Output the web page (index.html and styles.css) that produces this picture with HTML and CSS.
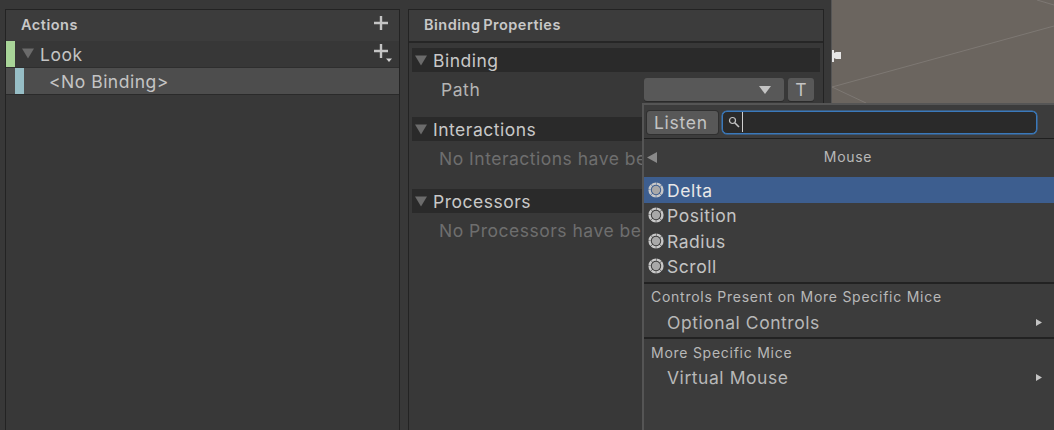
FILE: index.html
```html
<!DOCTYPE html>
<html lang="en">
<head>
<meta charset="utf-8">
<title>Input Actions</title>
<link rel="stylesheet" href="styles.css">
</head>
<body>
<div class="app">
  <section class="panel actions">
    <header class="panel-head">
      <span class="panel-title">Actions</span>
      <svg class="plus" width="16" height="16" viewBox="0 0 16 16"><path d="M8 1v14M1 8h14" stroke="#c4c4c4" stroke-width="2.4"/></svg>
    </header>
    <div class="row-look">
      <i class="swatch green"></i>
      <svg class="tri" width="12" height="11" viewBox="0 1 13 11"><path d="M0 1h13L6.500 12z" fill="#6b6b6b"/></svg>
      <span class="look-label">Look</span>
      <span class="look-add">
        <svg width="20" height="20" viewBox="0 0 20 20"><path d="M8 1v14M1 8h14" stroke="#c4c4c4" stroke-width="2.400"/><path d="M13 15.500h6l-3 3.500z" fill="#d0d0d0"/></svg>
      </span>
    </div>
    <div class="row-binding">
      <i class="swatch teal"></i>
      <span class="binding-label">&lt;No Binding&gt;</span>
    </div>
  </section>

  <section class="panel props">
    <header class="panel-head">
      <span class="panel-title">Binding Properties</span>
    </header>
    <div class="props-body">
      <div class="fold">
        <svg class="tri" width="12" height="11" viewBox="0 1 13 11"><path d="M0 1h13L6.500 12z" fill="#6b6b6b"/></svg>
        <span>Binding</span>
      </div>
      <div class="path-row">
        <span class="path-label">Path</span>
        <span class="path-select"><svg width="12" height="8" viewBox="0 0 12 8"><path d="M0 0h12L6 8z" fill="#c4c4c4"/></svg></span>
        <span class="path-t">T</span>
      </div>
      <div class="fold fold-interactions">
        <svg class="tri" width="12" height="11" viewBox="0 1 13 11"><path d="M0 1h13L6.500 12z" fill="#6b6b6b"/></svg>
        <span>Interactions</span>
      </div>
      <p class="empty">No Interactions have been added.</p>
      <div class="fold fold-processors">
        <svg class="tri" width="12" height="11" viewBox="0 1 13 11"><path d="M0 1h13L6.500 12z" fill="#6b6b6b"/></svg>
        <span>Processors</span>
      </div>
      <p class="empty">No Processors have been added.</p>
    </div>
  </section>

  <section class="scene">
    <svg class="scene-lines" width="222" height="110" viewBox="0 0 222 110">
      <path d="M0 87L222 26M0 87L34 103M205 0L222 5" stroke="#7d7873" stroke-width="1" fill="none"/>
    </svg>
    <svg class="scene-flag" width="9" height="12" viewBox="0 0 9 12"><path d="M0 0h2v12H0zM2 3l2-1h5v7H4l-2-1z" fill="#e6e6e6"/></svg>
  </section>
</div>

<div class="popup">
  <div class="search-bar">
    <span class="listen">Listen</span>
    <div class="search">
      <svg width="12" height="12" viewBox="0 0 12 12"><circle cx="4.500" cy="4.500" r="3" fill="none" stroke="#c4c4c4" stroke-width="1.200"/><path d="M7 7l4 4" stroke="#c4c4c4" stroke-width="1.600"/></svg>
      <i class="caret"></i>
    </div>
  </div>
  <div class="crumb">
    <svg class="back" width="10" height="11" viewBox="0 0 10 11"><path d="M10 0v11L0 5.500z" fill="#8a8a8a"/></svg>
    <span>Mouse</span>
  </div>
  <ul class="list">
    <li class="item selected"><svg class="ctl" width="16" height="16" viewBox="0 0 16 16"><circle cx="8" cy="8" r="6.400" fill="none" stroke="#c8c8c8" stroke-width="2.400" stroke-dasharray="4.500 .5"/><circle cx="8" cy="8" r="4.200" fill="#a8a8a8"/></svg>Delta</li>
    <li class="item"><svg class="ctl" width="16" height="16" viewBox="0 0 16 16"><circle cx="8" cy="8" r="6.400" fill="none" stroke="#c8c8c8" stroke-width="2.400" stroke-dasharray="4.500 .5"/><circle cx="8" cy="8" r="4.200" fill="#a8a8a8"/></svg>Position</li>
    <li class="item"><svg class="ctl" width="16" height="16" viewBox="0 0 16 16"><circle cx="8" cy="8" r="6.400" fill="none" stroke="#c8c8c8" stroke-width="2.400" stroke-dasharray="4.500 .5"/><circle cx="8" cy="8" r="4.200" fill="#a8a8a8"/></svg>Radius</li>
    <li class="item"><svg class="ctl" width="16" height="16" viewBox="0 0 16 16"><circle cx="8" cy="8" r="6.400" fill="none" stroke="#c8c8c8" stroke-width="2.400" stroke-dasharray="4.500 .5"/><circle cx="8" cy="8" r="4.200" fill="#a8a8a8"/></svg>Scroll</li>
  </ul>
  <div class="group">
    <div class="group-title">Controls Present on More Specific Mice</div>
    <div class="group-item"><span>Optional Controls</span><svg width="6" height="7" viewBox="0 0 6 7"><path d="M0 0l6 3.500L0 7z" fill="#c4c4c4"/></svg></div>
  </div>
  <div class="group">
    <div class="group-title">More Specific Mice</div>
    <div class="group-item"><span>Virtual Mouse</span><svg width="6" height="7" viewBox="0 0 6 7"><path d="M0 0l6 3.500L0 7z" fill="#c4c4c4"/></svg></div>
  </div>
</div>
</body>
</html>
```

FILE: styles.css
```css
* { box-sizing: border-box; }
html, body { margin: 0; padding: 0; }
body {
  width: 1054px;
  height: 430px;
  overflow: hidden;
  background: #383838;
  font-family: Inter, "Liberation Sans", sans-serif;
  color: #c4c4c4;
  position: relative;
}
.app {
  display: flex;
  height: 430px;
  padding-top: 9px;
  padding-left: 5px;
}
.panel {
  border: 1px solid #232323;
  border-bottom: 0;
  background: #383838;
  display: flex;
  flex-direction: column;
}
.actions { width: 395px; margin-right: 8px; }
.props { width: 416px; }
.panel-head {
  height: 31px;
  flex: none;
  background: #3c3c3c;
  display: flex;
  align-items: flex-start;
  justify-content: space-between;
  padding: 6px 10px 0 15px;
}
.panel-title {
  font-size: 14.500px;
  font-weight: 600;
  letter-spacing: .5px;
  word-spacing: -1.500px;
  line-height: 17px;
  color: #c8c8c8;
}
.plus { margin-top: -1px; }
.row-look {
  height: 26px;
  display: flex;
  align-items: center;
  background: #373737;
}
.swatch { display: block; width: 9px; height: 100%; flex: none; }
.green { background: #a8d498; }
.teal { background: #97bec6; margin-left: 9px; }
.row-look .tri { margin: -1px 0 0 7px; }
.look-label { font-size: 17.500px; letter-spacing: .55px; margin-left: 6px; }
.look-add { margin-left: auto; margin-right: 6px; display: flex; margin-top: -2px; }
.row-binding {
  height: 28px;
  display: flex;
  align-items: center;
  background: #4d4d4d;
  border-top: 1px solid #2e2e2e;
  border-bottom: 1px solid #2a2a2a;
}
.row-binding .swatch { height: 26px; }
.binding-label { font-size: 17.500px; letter-spacing: .5px; margin-left: 25px; }
.props-body {
  flex: 1;
  border-top: 2px solid #262626;
  padding: 5px 3px 0;
}
.fold {
  height: 24px;
  background: #2a2a2a;
  display: flex;
  align-items: center;
  font-size: 17.500px;
  letter-spacing: .5px;
  color: #c8c8c8;
  padding-left: 3px;
  width: 408px;
}
.fold .tri { margin-right: 6px; }
.path-row {
  display: flex;
  align-items: flex-end;
  height: 24px;
  margin-top: 5px;
  padding-left: 29px;
  font-size: 17.500px;
  letter-spacing: .55px;
}
.path-label { color: #b4b4b4; width: 203px; align-self: center; }
.path-select {
  width: 140px;
  height: 23px;
  background: #585858;
  border-radius: 3px;
  display: flex;
  align-items: center;
  justify-content: flex-end;
  padding-right: 13px;
  box-shadow: 0 1px 0 #2a2a2a;
}
.path-t {
  width: 26px;
  height: 23px;
  margin-left: 4px;
  background: #585858;
  border-radius: 3px;
  text-align: center;
  line-height: 23px;
  letter-spacing: 0;
  box-shadow: 0 1px 0 #2a2a2a;
}
.fold-interactions { margin-top: 16px; }
.fold-processors { margin-top: 18px; }
.empty {
  margin: 6px 0 0;
  padding-left: 27px;
  width: 230px;
  overflow: hidden;
  font-size: 17.500px;
  letter-spacing: .5px;
  line-height: 24px;
  color: #6e6e6e;
  white-space: nowrap;
}
.scene {
  flex: 1;
  margin-top: -9px;
  margin-left: 8px;
  background: #6b655f;
  box-shadow: -1px 0 0 #555;
  position: relative;
  overflow: hidden;
}
.scene-lines { position: absolute; left: 0; top: 0; }
.scene-flag { position: absolute; left: 0; top: 50px; }
.popup {
  position: absolute;
  left: 642px;
  top: 103px;
  width: 412px;
  height: 327px;
  background: #3c3c3c;
  border-left: 2px solid #555;
  border-top: 2px solid #555;
}
.search-bar {
  height: 34px;
  display: flex;
  align-items: center;
  padding: 1px 0 0 3px;
  border-bottom: 1px solid #1f1f1f;
}
.listen {
  width: 71px;
  height: 23px;
  background: #585858;
  border-radius: 3px;
  font-size: 17.500px;
  letter-spacing: .7px;
  line-height: 23px;
  padding-left: 7px;
  box-shadow: 0 0 0 1px #303030;
}
.search {
  margin-left: 4px;
  width: 315px;
  height: 23px;
  background: #2a2a2a;
  border: 1px solid #3a79bb;
  border-radius: 5px;
  display: flex;
  align-items: center;
  padding-left: 5px;
  box-shadow: 0 0 0 .5px #3a79bb;
}
.caret { display: block; width: 1px; height: 20px; background: #d0d0d0; margin-left: 2px; }
.crumb {
  height: 38px;
  position: relative;
  display: flex;
  align-items: center;
  justify-content: center;
  font-size: 14px;
  letter-spacing: .7px;
  color: #b8b8b8;
  padding: 0 2px 3px 0;
}
.back { position: absolute; left: 3px; top: 13px; }
.list { list-style: none; margin: 0; padding: 0; height: 107px; border-bottom: 2px solid #222; }
.item {
  height: 25.500px;
  display: flex;
  align-items: center;
  padding: 1px 0 0 4px;
  font-size: 17.500px;
  letter-spacing: .55px;
  color: #c4c4c4;
}
.ctl { margin: -1px 3px 0 0; flex: none; }
.selected { background: #3d5e8f; color: #e8e8e8; }
.group { border-bottom: 2px solid #222; height: 55px; padding-top: 3px; }
.group:last-child { border-bottom: 0; padding-top: 4px; }
.group:last-child .group-item { margin-top: 0; }
.group-title { font-size: 14px; letter-spacing: .74px; line-height: 20px; padding-left: 7px; color: #b8b8b8; }
.group-item {
  display: flex;
  justify-content: space-between;
  align-items: center;
  height: 28px;
  margin-top: 1px;
  padding: 0 12px 0 23px;
  font-size: 17.500px;
  letter-spacing: .55px;
  color: #b8b8b8;
}
```
